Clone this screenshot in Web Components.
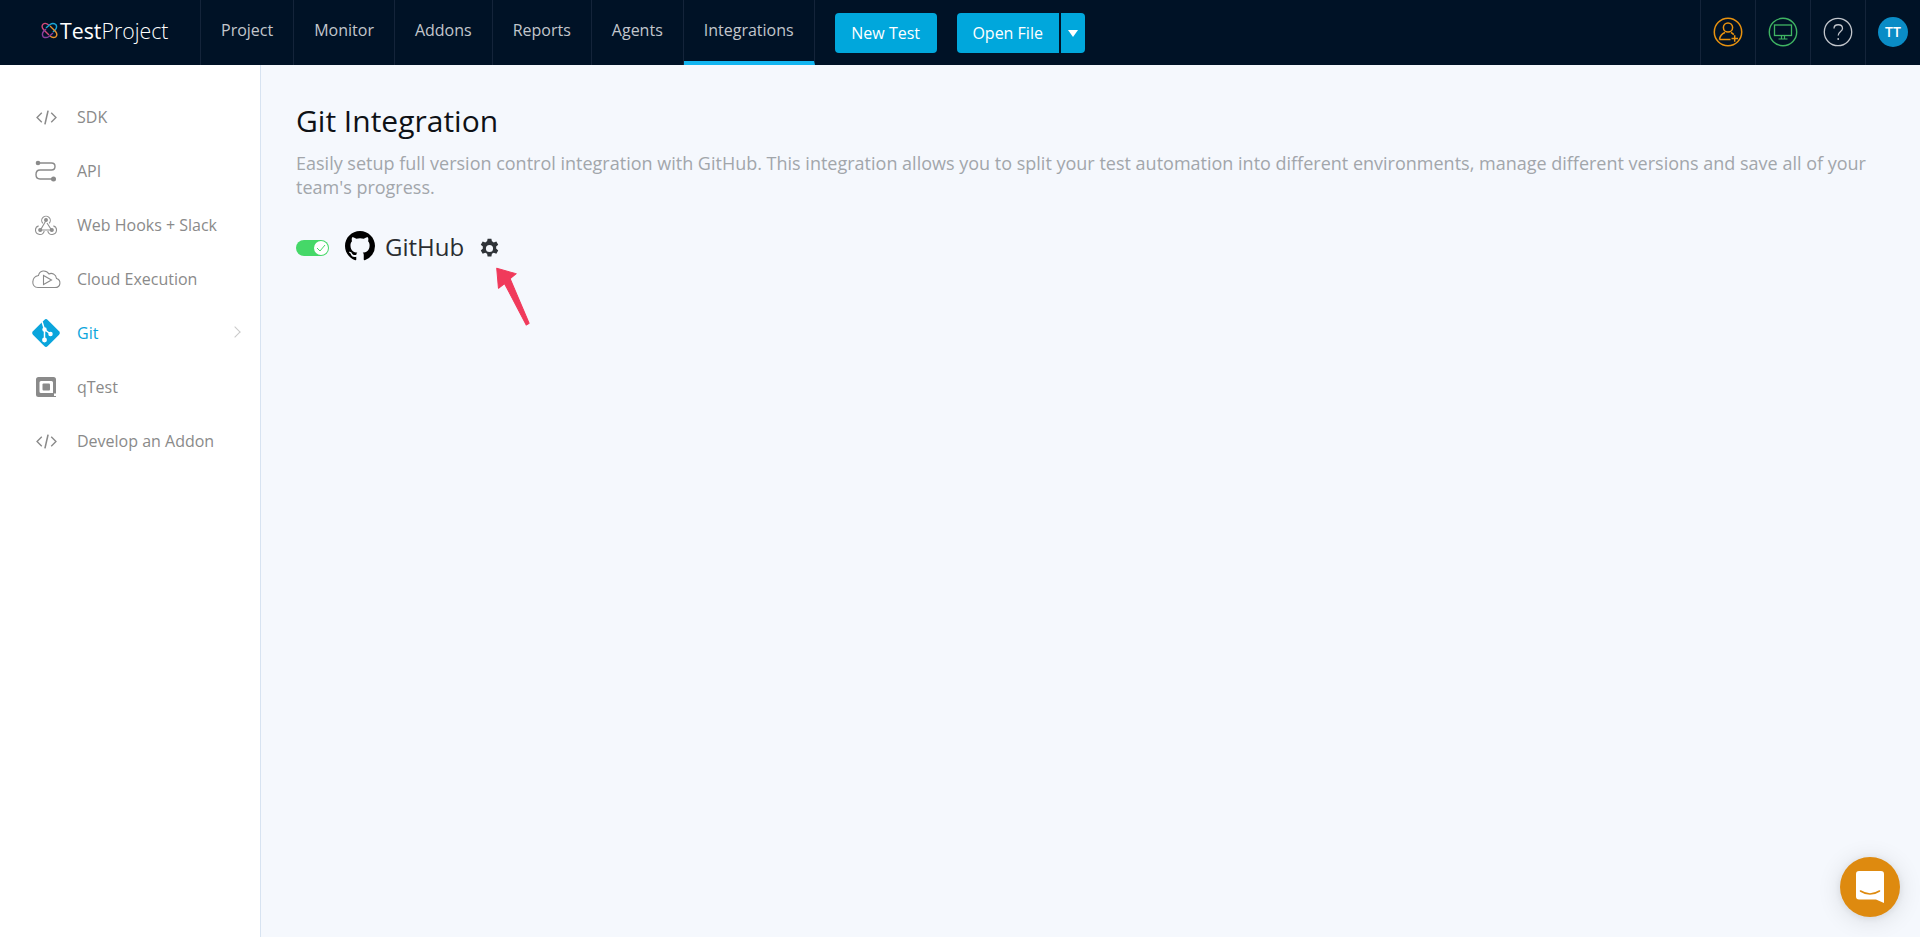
<!DOCTYPE html>
<html>
<head>
<meta charset="utf-8">
<title>TestProject</title>
<style>
  html, body { margin: 0; height: 100%; }
  body { font-family: "Open Sans", sans-serif; background: #f5f8fd; overflow: hidden; }
</style>
</head>
<body>
<app-shell>
  <top-bar slot="top"></top-bar>
  <side-menu slot="side"></side-menu>
  <git-page></git-page>
</app-shell>
<chat-button></chat-button>

<script>
class AppShell extends HTMLElement {
  constructor() {
    super();
    this.attachShadow({ mode: "open" });
    this.shadowRoot.innerHTML = `
      <style>
        :host { display: flex; flex-direction: column; height: 937px; }
        .body { display: flex; flex: 1; min-height: 0; }
        main { flex: 1; min-width: 0; }
      </style>
      <slot name="top"></slot>
      <div class="body">
        <slot name="side"></slot>
        <main><slot></slot></main>
      </div>
    `;
  }
}

class TopBar extends HTMLElement {
  constructor() {
    super();
    this.attachShadow({ mode: "open" });
    const tabs = ["Project", "Monitor", "Addons", "Reports", "Agents", "Integrations"];
    this.shadowRoot.innerHTML = `
      <style>
        :host { display: flex; height: 65px; background: #001226; align-items: stretch; }
        .logo { width: 200px; box-sizing: border-box; padding-left: 41px; display: flex; align-items: center; gap: 2px; color: #fff; font-size: 21.3px; font-weight: 300; height: 61px; }
        .logo b { font-weight: 400; }
        nav { display: flex; border-left: 1px solid #14243a; }
        nav a { box-sizing: border-box; padding: 0 20px; height: 65px; line-height: 61px; font-size: 16px; color: #c2c6cc; border-right: 1px solid #14243a; }
        nav a.on { border-bottom: 4px solid #12b5f0; }
        .btns { display: flex; align-items: flex-start; padding-top: 13px; margin-left: 20px; }
        button { font: 500 16px "Open Sans", sans-serif; color: #fff; background: #00a7dc; border: 0; border-radius: 4px; height: 40px; width: 102px; padding: 0; }
        .new { margin-right: 20px; }
        .open { border-radius: 4px 0 0 4px; }
        .caret { width: 24px; margin-left: 2px; border-radius: 0 4px 4px 0; display: flex; align-items: center; justify-content: center; }
        .caret i { border: 5px solid transparent; border-top: 7px solid #fff; border-bottom: 0; }
        .right { margin-left: auto; display: flex; }
        .cell { width: 55px; height: 65px; border-left: 1px solid #14243a; box-sizing: border-box; display: flex; align-items: center; justify-content: center; padding-bottom: 1px; }
        .cell svg { display: block; }
        .tt { width: 30px; height: 30px; border-radius: 50%; background: #0a8cc6; color: #fff; font-size: 14px; font-weight: 600; line-height: 30px; text-align: center; }
      </style>
      <div class="logo">
        <svg width="17" height="17" viewBox="0 0 17 17" fill="none" stroke-width="1.4">
          <path d="M8 3.2 Q4.5 .2 2 2.2 Q0 4.5 2.5 7.5 L8 13" stroke="#d1487a"/>
          <path d="M5 6 L9 2.5 Q12 .5 14.8 2.5 Q16.5 5 14.5 7.5 L12 10" stroke="#1aa6d8"/>
          <path d="M9 4 L14.5 9.5 Q17 12.5 14.8 14.8 Q12 16.5 9 14" stroke="#e8902c"/>
          <path d="M12 11 L8 14.5 Q5 16.5 2.2 14.8 Q.5 12 2.5 9.5 L5 7" stroke="#8b3f9e"/>
        </svg>
        <span><b>Test</b>Project</span>
      </div>
      <nav>
        ${tabs.map((t) => `<a class="${t === "Integrations" ? "on" : ""}">${t}</a>`).join("")}
      </nav>
      <div class="btns">
        <button class="new">New Test</button>
        <button class="open">Open File</button>
        <button class="caret"><i></i></button>
      </div>
      <div class="right">
        <div class="cell">
          <svg width="30" height="30" viewBox="0 0 30 30" fill="none" stroke="#e8920f" stroke-width="1.5">
            <circle cx="15" cy="15" r="13.7"/>
            <circle cx="15" cy="10.5" r="4.6"/>
            <path d="M6.5 22.5 C7 18.5 9.5 16.5 12 15.5 M18 15.5 C19 16 20 16.8 20.8 17.6 M6.5 22.5 H17.5"/>
            <path d="M18.5 21.5 H25 M21.7 18.2 V24.8"/>
          </svg>
        </div>
        <div class="cell">
          <svg width="30" height="30" viewBox="0 0 30 30" fill="none" stroke="#3fb563" stroke-width="1.4">
            <circle cx="15" cy="15" r="13.7"/>
            <rect x="6.5" y="8" width="17" height="10.5" stroke-width="1.3"/>
            <path d="M13.5 18.5 V21.5 M16.5 18.5 V21.5 M10.5 22 H19.5" stroke-width="1.2"/>
          </svg>
        </div>
        <div class="cell">
          <svg width="30" height="30" viewBox="0 0 30 30" fill="none" stroke="#c2c6cc" stroke-width="1.3">
            <circle cx="15" cy="15" r="13.7"/>
            <path d="M11 11.5 C11 6.5 19.5 6.5 19.5 11.5 C19.5 14.5 15.2 14.5 15.2 18.5" stroke-width="1.3"/>
            <circle cx="15.2" cy="22" r="0.9" fill="#c2c6cc" stroke="none"/>
          </svg>
        </div>
        <div class="cell"><div class="tt">TT</div></div>
      </div>
    `;
  }
}

const ICONS = {
  code: `<svg width="21" height="15" viewBox="0 0 20 14" fill="none" stroke="#8a8a8a" stroke-width="1.3"><path d="M5.5 2.5 L1 7 L5.5 11.5 M14.5 2.5 L19 7 L14.5 11.5"/><path d="M11.5 .5 L8.5 13.5" stroke-width="1.5"/></svg>`,
  api: `<svg width="22" height="22" viewBox="0 0 22 22" fill="none" stroke="#8a8a8a" stroke-width="1.4"><path d="M3 3 H16.5 Q20 3 20 6.5 Q20 10 16.5 10 H5 Q1 10 1 14.5 Q1 19 5 19 H18"/><circle cx="3" cy="3" r="2.3" fill="#8a8a8a" stroke="none"/><circle cx="18.5" cy="19" r="2.5" fill="#8a8a8a" stroke="none"/></svg>`,
  hook: `<svg width="22" height="21" viewBox="0 0 22 21" fill="none" stroke="#8f8f8f" stroke-width="1.1"><path d="M7.8 8.4 A4.3 4.3 0 1 1 14.2 8.4"/><path d="M3.6 10.9 A4.4 4.4 0 1 0 9.2 16"/><path d="M18.4 10.9 A4.4 4.4 0 1 1 12.8 16"/><path d="M11 5.5 L5.5 15 H16.5 L12 8"/><circle cx="11" cy="5" r="1.4" fill="#8f8f8f"/><circle cx="5.2" cy="15" r="1.5" fill="#8f8f8f"/><circle cx="16.8" cy="15" r="1.5" fill="#8f8f8f"/></svg>`,
  cloud: `<svg width="30" height="20" viewBox="0 0 30 20" fill="none" stroke="#8a8a8a" stroke-width="1.1"><path d="M7 18.5 H24 C30 18.5 30.5 11 25.5 9.5 C25 5 20.5 3.5 18 5 C15 .5 8.5 1 7.5 6.5 C.5 7.5 -.5 18.5 7 18.5 Z"/><path d="M12.5 6.5 V15.5 L20.5 11 Z"/></svg>`,
  git: `<svg width="30" height="30" viewBox="0 0 30 30"><rect x="4.5" y="4.5" width="21" height="21" rx="2.5" transform="rotate(45 15 15)" fill="#0aa5dc"/><g stroke="#fff" stroke-width="1.5" fill="#fff"><path d="M11 3.5 L13.5 11.5 V22 M13.5 11.5 L19.5 16" fill="none"/><circle cx="13.5" cy="11.5" r="1.5"/><circle cx="19.5" cy="16" r="1.5"/><circle cx="13.5" cy="22" r="1.7"/></g></svg>`,
  qtest: `<svg width="22" height="22" viewBox="0 0 22 22"><path fill="#8a8a8a" d="M3.5 1 H18.5 Q21 1 21 3.5 V17.5 H19 V20 H21 V21 H3.5 Q1 21 1 18.5 V3.5 Q1 1 3.5 1 Z M6 5 Q4.5 5 4.5 6.5 V15.5 Q4.5 17 6 17 H18 V6.5 Q18 5 16.5 5 Z"/><rect x="7.5" y="7.5" width="7.5" height="7" rx="1" fill="#8a8a8a"/></svg>`
};

class SideMenu extends HTMLElement {
  constructor() {
    super();
    this.attachShadow({ mode: "open" });
    const items = [
      ["SDK", "code"],
      ["API", "api"],
      ["Web Hooks + Slack", "hook"],
      ["Cloud Execution", "cloud"],
      ["Git", "git"],
      ["qTest", "qtest"],
      ["Develop an Addon", "code"]
    ];
    this.shadowRoot.innerHTML = `
      <style>
        :host { display: block; width: 261px; box-sizing: border-box; background: #fff; border-right: 1px solid #d7e3f1; padding-top: 25px; flex: none; }
        .item { height: 54px; display: flex; align-items: center; position: relative; font-size: 16px; color: #8a8a8a; }
        .icon { width: 46px; margin-left: 23px; margin-right: 8px; display: flex; justify-content: center; }
        .on { color: #0aa5dc; }
        .chev { position: absolute; left: 231px; top: 22px; width: 7px; height: 7px; border-top: 1px solid #c9c9c9; border-right: 1px solid #c9c9c9; transform: rotate(45deg); }
      </style>
      ${items.map(([label, icon]) => `
        <div class="item ${label === "Git" ? "on" : ""}">
          <span class="icon">${ICONS[icon]}</span>${label}
          ${label === "Git" ? `<span class="chev"></span>` : ""}
        </div>`).join("")}
    `;
  }
}

class GitPage extends HTMLElement {
  constructor() {
    super();
    this.attachShadow({ mode: "open" });
    this.shadowRoot.innerHTML = `
      <style>
        :host { display: block; padding: 35px 35px 0 35px; position: relative; }
        h1 { margin: 0; font-size: 30px; line-height: 41px; font-weight: 400; color: #0e1116; }
        p { margin: 10px 0 0; font-size: 18px; line-height: 24px; color: #a2a6ab; }
        .row { display: flex; align-items: center; margin-top: 31px; height: 32px; }
        .name { font-size: 24px; color: #2a2d31; margin-left: 10px; margin-right: 15px; }
        .gh { margin-left: 16px; display: block; }
        .gear { margin-top: 4px; display: block; }
        .arrow { position: absolute; left: 232px; top: 199px; }
        toggle-switch { margin-top: 3px; }
      </style>
      <h1>Git Integration</h1>
      <p>Easily setup full version control integration with GitHub. This integration allows you to split your test automation into different environments, manage different versions and save all of your team's progress.</p>
      <div class="row">
        <toggle-switch></toggle-switch>
        <svg class="gh" width="30" height="30" viewBox="0 0 16 16"><path fill="#000" d="M8 0C3.58 0 0 3.58 0 8c0 3.54 2.29 6.53 5.47 7.59.4.07.55-.17.55-.38 0-.19-.01-.82-.01-1.49-2.01.37-2.53-.49-2.69-.94-.09-.23-.48-.94-.82-1.13-.28-.15-.68-.52-.01-.53.63-.01 1.08.58 1.23.82.72 1.21 1.87.87 2.33.66.07-.52.28-.87.51-1.07-1.78-.2-3.64-.89-3.64-3.95 0-.87.31-1.59.82-2.15-.08-.2-.36-1.02.08-2.12 0 0 .67-.21 2.2.82.64-.18 1.32-.27 2-.27.68 0 1.36.09 2 .27 1.53-1.04 2.2-.82 2.2-.82.44 1.1.16 1.92.08 2.12.51.56.82 1.27.82 2.15 0 3.07-1.87 3.75-3.65 3.95.29.25.54.73.54 1.48 0 1.07-.01 1.93-.01 2.2 0 .21.15.46.55.38A8.013 8.013 0 0016 8c0-4.42-3.58-8-8-8z"/></svg>
        <span class="name">GitHub</span>
        <svg class="gear" width="21" height="21" viewBox="0 0 20 20"><path fill="#2f3338" fill-rule="evenodd" d="M8.2 .6 h3.6 l.5 2.6 a7 7 0 0 1 1.7 1 l2.5-.9 1.8 3.1-2 1.7 a7 7 0 0 1 0 2 l2 1.7-1.8 3.1-2.5-.9 a7 7 0 0 1-1.7 1 l-.5 2.6 H8.2 l-.5-2.6 a7 7 0 0 1-1.7-1 l-2.5.9-1.8-3.1 2-1.7 a7 7 0 0 1 0-2 l-2-1.7 1.8-3.1 2.5.9 a7 7 0 0 1 1.7-1 Z M10 6.6 a3.4 3.4 0 1 0 0 6.8 a3.4 3.4 0 0 0 0-6.8 Z"/></svg>
      </div>
      <svg class="arrow" width="40" height="70" viewBox="0 0 40 70">
        <path d="M6 3 L25 10 L18.5 14.5 L33.5 60.5 L30.5 62 L12.5 19 L6 23 Z" transform="rotate(-5 20 30)" fill="#f03a5b" stroke="#f03a5b" stroke-linejoin="round"/>
      </svg>
    `;
  }
}

class ToggleSwitch extends HTMLElement {
  constructor() {
    super();
    this.attachShadow({ mode: "open" });
    this.shadowRoot.innerHTML = `
      <style>
        :host { display: block; width: 33px; height: 16px; background: #45d868; border-radius: 8px; position: relative; flex: none; }
        .knob { position: absolute; right: 1px; top: 1px; width: 14px; height: 14px; border-radius: 50%; background: #fff; display: flex; align-items: center; justify-content: center; }
      </style>
      <span class="knob">
        <svg width="10" height="8" viewBox="0 0 10 8" fill="none" stroke="#45d868" stroke-width="1"><path d="M1 4 L4 7 L9 1"/></svg>
      </span>
    `;
  }
}

class ChatButton extends HTMLElement {
  constructor() {
    super();
    this.attachShadow({ mode: "open" });
    this.shadowRoot.innerHTML = `
      <style>
        :host { position: fixed; left: 1840px; top: 857px; width: 60px; height: 60px; border-radius: 50%; background: #de8a0f; box-shadow: 0 1px 8px rgba(0,0,0,.08), 0 3px 24px rgba(0,0,0,.12); display: flex; align-items: center; justify-content: center; }
      </style>
      <svg width="28" height="32" viewBox="0 0 28 32">
        <path fill="#fff" d="M3 0 H25 Q28 0 28 3 V32 L20 28.5 H3 Q0 28.5 0 25.5 V3 Q0 0 3 0 Z"/>
        <path d="M4.5 20 Q14 26 23.5 20" fill="none" stroke="#de8a0f" stroke-width="1.6" stroke-linecap="round"/>
      </svg>
    `;
  }
}

customElements.define("app-shell", AppShell);
customElements.define("top-bar", TopBar);
customElements.define("side-menu", SideMenu);
customElements.define("git-page", GitPage);
customElements.define("toggle-switch", ToggleSwitch);
customElements.define("chat-button", ChatButton);
</script>
</body>
</html>
